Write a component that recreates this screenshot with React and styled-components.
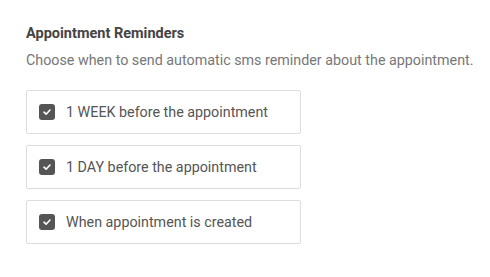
import React, { useState } from "react";
import styled, { createGlobalStyle } from "styled-components";

const GlobalStyle = createGlobalStyle`
    body {
        margin: 0;
        background: #fff;
        font-family: Roboto, "Liberation Sans", sans-serif;
    }
`;

const options = [
    { id: "week", label: "1 WEEK before the appointment" },
    { id: "day", label: "1 DAY before the appointment" },
    { id: "created", label: "When appointment is created" },
];

const App = () => {
    const [checked, setChecked] = useState({ week: true, day: true, created: true });

    const toggleHandler = (id) => {
        setChecked((prev) => ({ ...prev, [id]: !prev[id] }));
    };

    return (
        <>
            <GlobalStyle />
            <Section>
                <Title>Appointment Reminders</Title>
                <Description>Choose when to send automatic sms reminder about the appointment.</Description>
                <OptionList>
                    {options.map((option) => (
                        <Option key={option.id} onClick={() => toggleHandler(option.id)}>
                            <CheckBox $checked={checked[option.id]}>
                                {checked[option.id] && (
                                    <svg width="10" height="10" viewBox="0 0 10 10">
                                        <path
                                            d="M2 5.2 L4.1 7.2 L8 3"
                                            fill="none"
                                            stroke="#fff"
                                            strokeWidth="1.6"
                                            strokeLinecap="round"
                                            strokeLinejoin="round"
                                        />
                                    </svg>
                                )}
                            </CheckBox>
                            <Label>{option.label}</Label>
                        </Option>
                    ))}
                </OptionList>
            </Section>
        </>
    );
};

export default App;

const Section = styled.div`
    padding: 24px 26px;
`;

const Title = styled.h4`
    margin: 0;
    font-size: 14.5px;
    font-weight: 700;
    line-height: 20px;
    color: #444;
`;

const Description = styled.p`
    margin: 6px 0 0;
    font-size: 14.3px;
    line-height: 20px;
    color: #777;
    white-space: nowrap;
`;

const OptionList = styled.div`
    margin-top: 20px;
    display: flex;
    flex-direction: column;
    gap: 11px;
    width: 275px;
`;

const Option = styled.label`
    display: flex;
    align-items: center;
    gap: 11px;
    height: 44px;
    box-sizing: border-box;
    padding: 0 12px;
    border: 1px solid #ddd;
    border-radius: 2px;
    cursor: pointer;
`;

const CheckBox = styled.span`
    display: flex;
    align-items: center;
    justify-content: center;
    width: 16px;
    height: 16px;
    border-radius: 3px;
    background: ${(props) => (props.$checked ? "#555" : "#fff")};
    border: ${(props) => (props.$checked ? "none" : "1px solid #999")};
    box-sizing: border-box;
`;

const Label = styled.span`
    font-size: 14.3px;
    color: #555;
`;
